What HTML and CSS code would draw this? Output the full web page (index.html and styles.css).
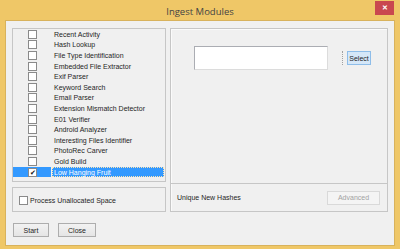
FILE: index.html
```html
<!DOCTYPE html>
<html lang="en">
<head>
    <meta charset="UTF-8">
    <title>Ingest Modules</title>
    <link rel="stylesheet" href="styles.css">
</head>
<body>
    <div class="window">
        <div class="titlebar">
            <span class="title">Ingest Modules</span>
            <span class="close">&#x2715;</span>
        </div>
        <div class="client">
            <div class="panes">
                <div class="left-col">
                    <ul class="module-list">
                        <li class="row"><span class="cell-check"><span class="chk"></span></span><span class="cell-name">Recent Activity</span></li>
                        <li class="row"><span class="cell-check"><span class="chk"></span></span><span class="cell-name">Hash Lookup</span></li>
                        <li class="row"><span class="cell-check"><span class="chk"></span></span><span class="cell-name">File Type Identification</span></li>
                        <li class="row"><span class="cell-check"><span class="chk"></span></span><span class="cell-name">Embedded File Extractor</span></li>
                        <li class="row"><span class="cell-check"><span class="chk"></span></span><span class="cell-name">Exif Parser</span></li>
                        <li class="row"><span class="cell-check"><span class="chk"></span></span><span class="cell-name">Keyword Search</span></li>
                        <li class="row"><span class="cell-check"><span class="chk"></span></span><span class="cell-name">Email Parser</span></li>
                        <li class="row"><span class="cell-check"><span class="chk"></span></span><span class="cell-name">Extension Mismatch Detector</span></li>
                        <li class="row"><span class="cell-check"><span class="chk"></span></span><span class="cell-name">E01 Verifier</span></li>
                        <li class="row"><span class="cell-check"><span class="chk"></span></span><span class="cell-name">Android Analyzer</span></li>
                        <li class="row"><span class="cell-check"><span class="chk"></span></span><span class="cell-name">Interesting Files Identifier</span></li>
                        <li class="row"><span class="cell-check"><span class="chk"></span></span><span class="cell-name">PhotoRec Carver</span></li>
                        <li class="row"><span class="cell-check"><span class="chk"></span></span><span class="cell-name">Gold Build</span></li>
                        <li class="row selected"><span class="cell-check"><span class="chk checked">&#x2714;</span></span><span class="cell-name">Low Hanging Fruit</span></li>
                    </ul>
                    <div class="unalloc">
                        <span class="chk"></span>
                        <span>Process Unallocated Space</span>
                    </div>
                </div>
                <div class="settings">
                    <div class="settings-top">
                        <div class="text-field"></div>
                        <span class="grip"></span>
                        <span class="btn btn-select">Select</span>
                    </div>
                    <div class="settings-bottom">
                        <span>Unique New Hashes</span>
                        <span class="btn btn-disabled">Advanced</span>
                    </div>
                </div>
            </div>
            <div class="actions">
                <span class="btn btn-start">Start</span>
                <span class="btn btn-close">Close</span>
            </div>
        </div>
    </div>
</body>
</html>
```
FILE: styles.css
```css
* {
    margin: 0;
    padding: 0;
    box-sizing: border-box;
}

body {
    background: #fff;
    font-family: 'Liberation Sans', Arial, sans-serif;
    font-size: 7px;
    color: #1e1e1e;
}

.window {
    width: 400px;
    height: 249px;
    background: #efc767;
    padding: 0 5px 3px;
    display: flex;
    flex-direction: column;
}

.titlebar {
    height: 20px;
    display: flex;
    align-items: center;
    justify-content: center;
    position: relative;
}

.title {
    font-family: 'Open Sans', sans-serif;
    font-size: 9.5px;
    color: #444;
    margin-top: 3px;
}

.close {
    position: absolute;
    right: 1px;
    top: 1px;
    width: 19px;
    height: 14px;
    background: #c9484f;
    color: #fff;
    font-size: 7px;
    font-weight: bold;
    display: flex;
    align-items: center;
    justify-content: center;
}

.client {
    flex: 1;
    background: #f0f0f0;
    border: 1px solid #d8b25c;
    padding: 7px 6px 0;
}

.panes {
    display: flex;
    gap: 4px;
    height: 184px;
}

.left-col {
    width: 154px;
    display: flex;
    flex-direction: column;
    gap: 5px;
}

.module-list {
    list-style: none;
    height: 154px;
    border: 1px solid #c6c6c6;
    background: #f0f0f0;
}

.row {
    display: flex;
    height: 10.6px;
    align-items: center;
}

.cell-check {
    width: 38px;
    height: 100%;
    display: flex;
    align-items: center;
    padding-left: 15px;
}

.cell-name {
    flex: 1;
    height: 100%;
    margin: 0 1px;
    padding-left: 1px;
    display: flex;
    align-items: center;
    white-space: nowrap;
    border: 1px dotted transparent;
}

.chk {
    width: 9px;
    height: 9px;
    border: 1px solid #8a8a8a;
    background: #fff;
    display: inline-flex;
    align-items: center;
    justify-content: center;
    font-size: 7px;
    line-height: 1;
    color: #111;
}

.selected .cell-check,
.selected .cell-name {
    background: #3399ff;
}

.selected .cell-name {
    color: #fff;
    border-color: #ffe4b0;
}

.unalloc {
    height: 25px;
    border: 1px solid #c6c6c6;
    display: flex;
    align-items: center;
    gap: 2px;
    padding-left: 6px;
    padding-top: 1px;
}

.settings {
    flex: 1;
    border: 1px solid #c6c6c6;
    box-shadow: inset 1px 1px 0 #fafafa;
    display: flex;
    flex-direction: column;
}

.settings-top {
    height: 155px;
    border-bottom: 1px solid #c6c6c6;
    display: flex;
    align-items: flex-start;
    padding: 17px 0 0 23px;
}

.text-field {
    width: 134px;
    height: 24px;
    background: #fff;
    border: 1px solid #abadb3;
    border-right-color: #dcdcdc;
    border-bottom-color: #dcdcdc;
}

.grip {
    width: 1px;
    height: 14px;
    margin: 5px 0 0 14px;
    border-left: 1px dotted #a0a0a0;
}

.btn {
    height: 14px;
    display: flex;
    align-items: center;
    justify-content: center;
    border: 1px solid #adadad;
    background: linear-gradient(#f2f2f2, #e5e5e5);
    color: #1e1e1e;
}

.btn-select {
    width: 24px;
    margin: 5px 0 0 4px;
    background: #d5e7f8;
    border-color: #8ebde9;
}

.settings-bottom {
    flex: 1;
    display: flex;
    align-items: center;
    justify-content: space-between;
    padding: 0 7px 0 6px;
}

.btn-disabled {
    width: 53px;
    background: #f4f4f4;
    border-color: #d9d9d9;
    color: #a2a2a2;
}

.actions {
    display: flex;
    gap: 9px;
    margin-top: 11px;
    padding-left: 1px;
}

.btn-start {
    width: 36px;
}

.btn-close {
    width: 38px;
}
```
